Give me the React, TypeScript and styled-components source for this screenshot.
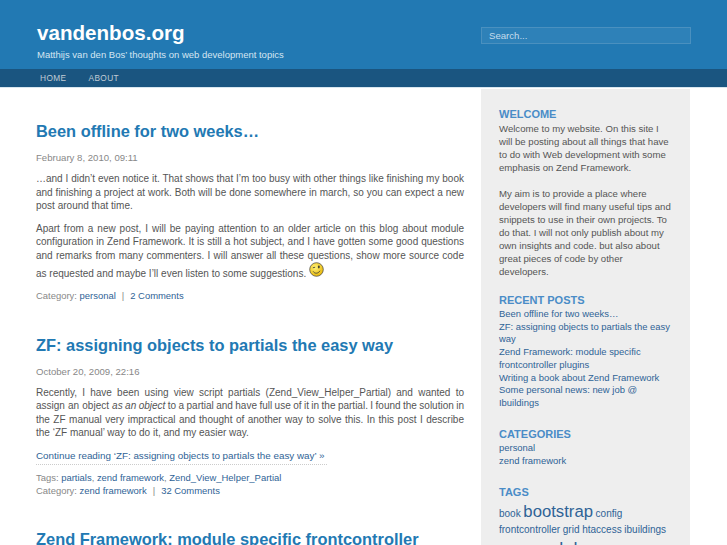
import { createGlobalStyle, styled } from 'styled-components';

const GlobalStyle = createGlobalStyle`
  html, body {
    margin: 0;
    height: 545px;
    overflow: hidden;
    background: #fff;
  }
  body {
    font-family: "Liberation Sans", Arial, sans-serif;
    font-size: 9.6px;
    color: #555;
  }
  a {
    color: #2f6396;
    text-decoration: none;
  }
`;

const Header = styled.header`
  height: 69px;
  background: #2279b3;
  display: flex;
  justify-content: space-between;
  padding: 0 36px 0 37px;
`;

const Brand = styled.div`
  padding-top: 20px;
`;

const SiteName = styled.h1`
  margin: 0;
  font-size: 20.6px;
  line-height: 26px;
  font-weight: bold;
  color: #fff;
`;

const Tagline = styled.p`
  margin: 3px 0 0;
  font-size: 9.5px;
  line-height: 12px;
  color: #d5e6f2;
`;

const SearchInput = styled.input`
  box-sizing: border-box;
  width: 210px;
  height: 17px;
  margin-top: 27px;
  padding: 0 7px;
  border: 1px solid #4a90bf;
  background: #2e81b8;
  color: #c6dcec;
  font: 9.6px "Liberation Sans", Arial, sans-serif;
  &::placeholder {
    color: #c6dcec;
    opacity: 1;
  }
`;

const Nav = styled.nav`
  height: 18px;
  background: #1a5580;
  border-bottom: 1px solid #d8e6ef;
  display: flex;
  gap: 22px;
  padding-left: 40px;
`;

const NavLink = styled.a`
  font-size: 8.3px;
  line-height: 18px;
  letter-spacing: 0.4px;
  color: #c0ccd6;
`;

const Page = styled.div`
  display: flex;
  align-items: flex-start;
  padding: 1px 37px 0 36px;
`;

const Main = styled.main`
  width: 428px;
  margin-right: 17px;
  padding-top: 31px;
`;

const Post = styled.article`
  margin-bottom: 31.4px;
`;

const PostTitle = styled.h2`
  margin: 0;
  font-size: 16.4px;
  line-height: 22px;
  font-weight: bold;
  color: #2279b3;
`;

const PostDate = styled.div`
  margin: 9px 0 8px;
  line-height: 13px;
  color: #888;
`;

const Paragraph = styled.p`
  margin: 0 0 9px;
  font-size: 10px;
  line-height: 13.6px;
  text-align: justify;
`;

const TightRun = styled.span`
  word-spacing: -0.7px;
`;

const Smiley = styled.svg`
  width: 15px;
  height: 15px;
  margin: -1px 0 0 0;
  vertical-align: 0;
`;

const Continue = styled.div`
  width: 291px;
  margin: 9px 0 6px;
  padding-bottom: 2px;
  font-size: 9.85px;
  line-height: 13px;
  white-space: nowrap;
  border-bottom: 1px dotted #ccc;
`;

const Meta = styled.div`
  font-size: 9.45px;
  line-height: 13px;
  color: #888;
`;

const Pipe = styled.span`
  margin: 0 6px;
`;

const Sidebar = styled.aside`
  width: 209px;
  flex: none;
  height: 456px;
  overflow: hidden;
  box-sizing: border-box;
  padding: 18px 16px 0 18px;
  background: #eee;
`;

const Widget = styled.section`
  margin-bottom: 15px;
`;

const WidgetTitle = styled.h3`
  margin: 0 0 1px;
  font-size: 11px;
  line-height: 14px;
  font-weight: bold;
  color: #4a8cc7;
`;

const WidgetText = styled.p`
  margin: 0 0 13px;
  line-height: 13px;
`;

const LinkList = styled.ul`
  margin: 0 0 17.5px;
  padding: 0 2px 0 0;
  list-style: none;
  font-size: 9.45px;
  line-height: 12.7px;
`;

const TagCloud = styled.div`
  margin-top: 5px;
  padding-right: 2px;
  line-height: 16px;
`;

const Tag = styled.a<{ $size: number }>`
  font-size: ${(p) => p.$size}px;
  line-height: ${(p) => (p.$size > 17 ? '23px' : '16px')};
`;

const recentPosts = [
  'Been offline for two weeks…',
  'ZF: assigning objects to partials the easy way',
  'Zend Framework: module specific frontcontroller plugins',
  'Writing a book about Zend Framework',
  'Some personal news: new job @ Ibuildings',
];

const tags: [string, number][] = [
  ['book', 10],
  ['bootstrap', 16.7],
  ['config', 10],
  ['frontcontroller', 10],
  ['grid', 10],
  ['htaccess', 10],
  ['ibuildings', 10],
  ['layout', 10],
  ['module', 18],
  ['partials', 10],
];

const App = () => (
  <>
    <GlobalStyle />
    <Header>
      <Brand>
        <SiteName>vandenbos.org</SiteName>
        <Tagline>Matthijs van den Bos’ thoughts on web development topics</Tagline>
      </Brand>
      <SearchInput placeholder="Search..." />
    </Header>
    <Nav>
      <NavLink href="#">HOME</NavLink>
      <NavLink href="#">ABOUT</NavLink>
    </Nav>
    <Page>
      <Main>
        <Post>
          <PostTitle>Been offline for two weeks…</PostTitle>
          <PostDate>February 8, 2010, 09:11</PostDate>
          <Paragraph>
            …and I didn’t even notice it. That shows that I’m too busy with other things like
            finishing my book and finishing a project at work. Both will be done somewhere in
            march, so you can expect a new post around that time.
          </Paragraph>
          <Paragraph>
            Apart from a new post, I will be paying attention to an older article on this blog
            about module configuration in Zend Framework. It is still a hot subject, and I have
            gotten some good questions and remarks from many commenters. I will answer all these
            questions, show more source code as requested and maybe I’ll even listen to some
            suggestions.{' '}
            <Smiley viewBox="0 0 15 15">
              <defs>
                <radialGradient id="smileyFill" cx="0.4" cy="0.35" r="0.7">
                  <stop offset="0" stopColor="#fff27a" />
                  <stop offset="1" stopColor="#e8b400" />
                </radialGradient>
              </defs>
              <circle cx="7.5" cy="7.5" r="6.8" fill="url(#smileyFill)" stroke="#55534a" strokeWidth="0.8" />
              <path d="M3.8 5.8l2.4-.6" stroke="#443" strokeWidth="0.9" fill="none" />
              <ellipse cx="9.8" cy="5" rx="1" ry="1.4" fill="#443" />
              <path d="M4.2 9.4c1.4 2.4 4.8 2.6 6.8-.6" stroke="#443" strokeWidth="0.9" fill="none" />
            </Smiley>
          </Paragraph>
          <Meta>
            Category: <a href="#">personal</a>
            <Pipe>|</Pipe>
            <a href="#">2 Comments</a>
          </Meta>
        </Post>
        <Post>
          <PostTitle>ZF: assigning objects to partials the easy way</PostTitle>
          <PostDate>October 20, 2009, 22:16</PostDate>
          <Paragraph>
            Recently, I have been using view script partials (Zend_View_Helper_Partial) and wanted
            to assign an object{' '}
            <TightRun>
              <em>as an object</em> to a partial and have full use of it in the partial. I found the
              solution in
            </TightRun>{' '}
            the ZF manual very impractical and thought of another way to solve this. In this post I
            describe the ‘ZF manual’ way to do it, and my easier way.
          </Paragraph>
          <Continue>
            <a href="#">Continue reading ‘ZF: assigning objects to partials the easy way’ »</a>
          </Continue>
          <Meta>
            Tags: <a href="#">partials</a>, <a href="#">zend framework</a>,{' '}
            <a href="#">Zend_View_Helper_Partial</a>
          </Meta>
          <Meta>
            Category: <a href="#">zend framework</a>
            <Pipe>|</Pipe>
            <a href="#">32 Comments</a>
          </Meta>
        </Post>
        <Post>
          <PostTitle>Zend Framework: module specific frontcontroller</PostTitle>
        </Post>
      </Main>
      <Sidebar>
        <Widget>
          <WidgetTitle>WELCOME</WidgetTitle>
          <WidgetText>
            Welcome to my website. On this site I will be posting about all things that have to
            {' do\u00a0with '}Web development with some emphasis on Zend Framework.
          </WidgetText>
          <WidgetText>
            My aim is to provide a place where developers will find many useful tips and snippets
            to use in their own projects. To do that. I will not only publish about my own insights
            and code. but also about great pieces of code by other developers.
          </WidgetText>
        </Widget>
        <Widget>
          <WidgetTitle>RECENT POSTS</WidgetTitle>
          <LinkList>
            {recentPosts.map((title) => (
              <li key={title}>
                <a href="#">{title}</a>
              </li>
            ))}
          </LinkList>
        </Widget>
        <Widget>
          <WidgetTitle>CATEGORIES</WidgetTitle>
          <LinkList>
            <li>
              <a href="#">personal</a>
            </li>
            <li>
              <a href="#">zend framework</a>
            </li>
          </LinkList>
        </Widget>
        <Widget>
          <WidgetTitle>TAGS</WidgetTitle>
          <TagCloud>
            {tags.map(([name, size]) => (
              <span key={name}>
                <Tag href="#" $size={size}>
                  {name}
                </Tag>{' '}
              </span>
            ))}
          </TagCloud>
        </Widget>
      </Sidebar>
    </Page>
  </>
);

export default App;
